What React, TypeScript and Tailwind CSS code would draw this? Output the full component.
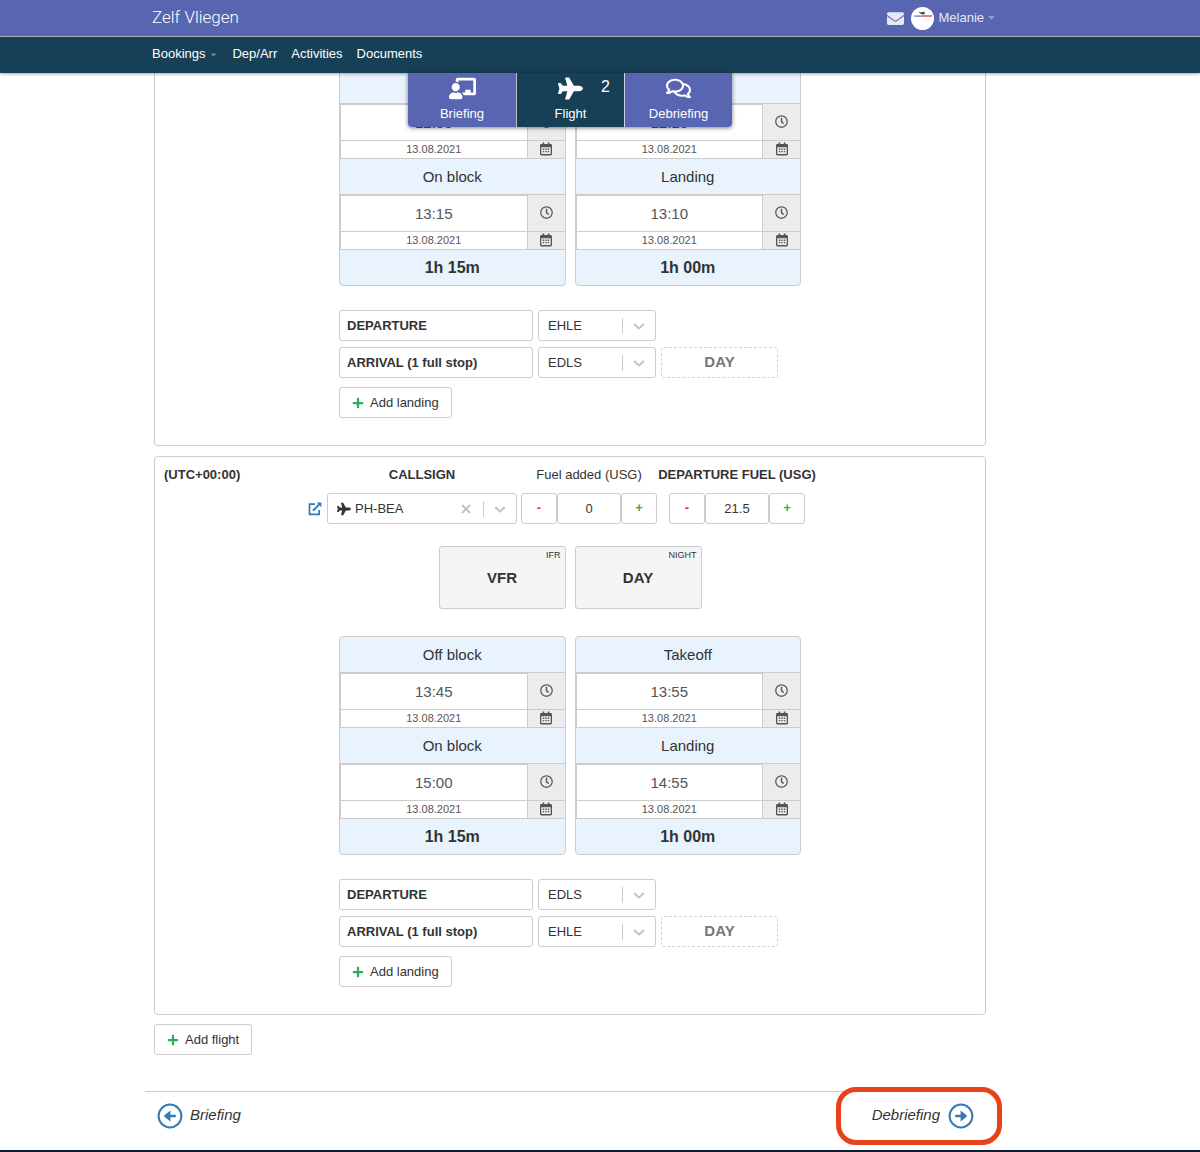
import { useState } from 'react';
import type { ReactNode } from 'react';
import {
   FaCaretDown,
   FaChalkboardTeacher,
   FaEnvelope,
   FaPlane,
   FaPlus,
   FaRegClock,
   FaRegComments
} from 'react-icons/fa';

interface Block {
   title: string;
   time: string;
}

interface FlightTimes {
   blocks: Block[];
   total: string;
}

const DATE = '13.08.2021';

const firstFlight: FlightTimes[] = [
   { blocks: [{ title: 'Off block', time: '12:00' }, { title: 'On block', time: '13:15' }], total: '1h 15m' },
   { blocks: [{ title: 'Takeoff', time: '12:10' }, { title: 'Landing', time: '13:10' }], total: '1h 00m' }
];

const secondFlight: FlightTimes[] = [
   { blocks: [{ title: 'Off block', time: '13:45' }, { title: 'On block', time: '15:00' }], total: '1h 15m' },
   { blocks: [{ title: 'Takeoff', time: '13:55' }, { title: 'Landing', time: '14:55' }], total: '1h 00m' }
];

const Chevron = () => (
   <svg viewBox="0 0 20 20" className="h-[18px] w-[18px] fill-[#c4c4c4]" aria-hidden="true">
      <path d="M4.516 7.548c0.436-0.446 1.043-0.481 1.576 0l3.908 3.747 3.908-3.747c0.533-0.481 1.141-0.446 1.574 0 0.436 0.445 0.408 1.197 0 1.615-0.406 0.418-4.695 4.502-4.695 4.502-0.217 0.223-0.502 0.335-0.787 0.335s-0.57-0.112-0.789-0.335c0 0-4.287-4.084-4.695-4.502s-0.436-1.17 0-1.615z" />
   </svg>
);

const CalendarIcon = () => (
   <svg viewBox="0 0 12 14" className="h-[14px] w-3" fill="currentColor" aria-hidden="true">
      <path d="M2.6 0.4H4.2V2H7.8V0.4H9.4V2H10.6Q12 2 12 3.4V12Q12 13.4 10.6 13.4H1.4Q0 13.4 0 12V3.4Q0 2 1.4 2H2.6ZM1.3 5.2V11.6Q1.3 12.1 1.8 12.1H10.2Q10.7 12.1 10.7 11.6V5.2Z" fillRule="evenodd" />
      <path d="M2.8 6.6H4.2V7.9H2.8ZM5.3 6.6H6.7V7.9H5.3ZM7.8 6.6H9.2V7.9H7.8ZM2.8 9H4.2V10.3H2.8ZM5.3 9H6.7V10.3H5.3ZM7.8 9H9.2V10.3H7.8Z" />
   </svg>
);

const ExternalLink = () => (
   <svg viewBox="0 0 14 14" className="h-[14px] w-[14px]" fill="none" stroke="#337ab7" strokeWidth="1.7" aria-hidden="true">
      <path d="M7 2.2H1.5V12.4H11.2V8" />
      <path d="M5 8.7L11.6 2.1" strokeWidth="2" />
      <path d="M8.6 0.4H13.4V5.2Z" fill="#337ab7" stroke="none" />
   </svg>
);

const CircleArrow = ({ left }: { left?: boolean }) => (
   <svg viewBox="0 0 26 26" className={left ? 'h-[26px] w-[26px] rotate-180' : 'h-[26px] w-[26px]'} aria-hidden="true">
      <circle cx="13" cy="13" r="11.4" fill="none" stroke="#337ab7" strokeWidth="2" />
      <path d="M7.2 11.7H12.6V8.2Q12.6 7.4 13.3 8L18.6 12.3Q19.3 13 18.6 13.7L13.3 18Q12.6 18.6 12.6 17.8V14.3H7.2Z" fill="#337ab7" />
   </svg>
);

const Tab = ({ icon, label, active, count }: { icon: ReactNode; label: string; active?: boolean; count?: number }) => (
   <button
      type="button"
      className={`relative flex h-[54px] w-[108px] flex-col items-center gap-1 border-white/70 pt-[3px] text-[13px] leading-5 text-white not-first:border-l ${active ? 'bg-[#173f56]' : 'bg-[#5865b0]'}`}
   >
      <span className="flex h-6 items-center">{icon}</span>
      <span>{label}</span>
      {count && <span className="absolute top-1 right-[14px] text-base leading-5">{count}</span>}
   </button>
);

const Select = ({ label, value, className, children }: { label: string; value: string; className: string; children?: ReactNode }) => (
   <div className={`flex h-[31px] items-center rounded-[3px] border border-[#ccc] bg-white ${className}`}>
      {children}
      <select aria-label={label} defaultValue={value} className="order-2 h-full min-w-0 flex-1 appearance-none text-[13px] outline-none">
         <option>{value}</option>
      </select>
      <span className="order-4 h-4 w-px bg-[#ccc]" />
      <span className="order-5 flex w-8 justify-center">
         <Chevron />
      </span>
   </div>
);

const Stepper = ({ label, initial }: { label: string; initial: string }) => {
   const [value, setValue] = useState(initial);
   const step = (by: number) => setValue(String(Number(value) + by));

   return (
      <div className="flex h-[31px]">
         <button type="button" aria-label={`Less ${label}`} onClick={() => step(-1)} className="w-9 rounded-[3px] border border-[#ccc] pb-0.5 text-[13px] font-bold text-[#d9342b]">
            -
         </button>
         <input
            id={label}
            value={value}
            onChange={(e) => setValue(e.target.value)}
            className="w-16 rounded-[3px] border border-[#ccc] text-center text-[13px] outline-none"
         />
         <button type="button" aria-label={`More ${label}`} onClick={() => step(1)} className="w-9 rounded-[3px] border border-[#ccc] pb-0.5 text-[13px] font-bold text-[#27ae60]">
            +
         </button>
      </div>
   );
};

const ModeButton = ({ value, other }: { value: string; other: string }) => (
   <button type="button" className="flex h-[63px] w-[127px] flex-col rounded-[3px] border border-[#ccc] bg-[#f5f5f5] px-1">
      <span className="mt-[3px] self-end text-[9px] leading-[11px]">{other}</span>
      <span className="mt-[5px] self-center text-[15px] leading-6 font-bold">{value}</span>
   </button>
);

const TimeCard = ({ times }: { times: FlightTimes }) => (
   <div className="flex-1 overflow-hidden rounded-[4px] border border-[#ccc] bg-[#e8f3fd] text-center">
      {times.blocks.map((block) => (
         <div key={block.title}>
            <h3 className="h-9 border-b border-[#ccc] text-[15px] leading-9">{block.title}</h3>
            <div className="flex h-[37px]">
               <input aria-label={`${block.title} time`} defaultValue={block.time} className="min-w-0 flex-1 border border-[#ccc] bg-white pt-0.5 text-center text-[15px] text-[#555] outline-none" />
               <button type="button" aria-label={`Pick ${block.title} time`} className="flex w-[37px] items-center justify-center border-b border-[#ccc] bg-[#ececec] pb-0.5 text-[#555]">
                  <FaRegClock size={13} />
               </button>
            </div>
            <div className="flex h-[18px] border-b border-[#ccc]">
               <input aria-label={`${block.title} date`} defaultValue={DATE} className="min-w-0 flex-1 border-x border-[#ccc] bg-white text-center text-[11px] text-[#555] outline-none" />
               <button type="button" aria-label={`Pick ${block.title} date`} className="flex w-[37px] items-center justify-center bg-[#ececec] pb-0.5 text-[#555]">
                  <CalendarIcon />
               </button>
            </div>
         </div>
      ))}
      <p className="h-[35px] text-base leading-9 font-bold">{times.total}</p>
   </div>
);

const AddButton = ({ label }: { label: string }) => (
   <button type="button" className="flex h-[31px] items-center gap-1.5 rounded-[3px] border border-[#ccc] bg-white px-3 text-[13px]">
      <FaPlus size={12} className="text-[#27ae60]" />
      {label}
   </button>
);

const FlightDetails = ({ times, departure, arrival }: { times: FlightTimes[]; departure: string; arrival: string }) => (
   <div className="mx-auto w-[462px]">
      <div className="flex gap-[9px]">
         {times.map((t) => (
            <TimeCard key={t.total} times={t} />
         ))}
      </div>

      <div className="mt-6 flex flex-col gap-1.5">
         <div className="flex gap-[5px]">
            <div className="h-[31px] w-[194px] rounded-[3px] border border-[#ccc] px-[7px] text-[13px] leading-[29px] font-bold">DEPARTURE</div>
            <Select label="Departure airport" value={departure} className="w-[118px] pl-[9px]" />
         </div>
         <div className="flex gap-[5px]">
            <div className="h-[31px] w-[194px] rounded-[3px] border border-[#ccc] px-[7px] text-[13px] leading-[29px] font-bold">ARRIVAL (1 full stop)</div>
            <Select label="Arrival airport" value={arrival} className="w-[118px] pl-[9px]" />
            <button type="button" className="w-[117px] rounded-[3px] border border-dashed border-[#d4d4d4] text-[15px] font-bold text-[#777]">DAY</button>
         </div>
      </div>

      <div className="mt-[9px]">
         <AddButton label="Add landing" />
      </div>
   </div>
);

const Header = () => (
   <header className="sticky top-0 z-10 text-white shadow-[0_1px_3px_rgba(0,0,0,0.35)]">
      <div className="border-b border-[#a9a9b8] bg-[#5865b0] pr-15">
         <div className="mx-auto flex h-9 max-w-[850px] items-center justify-between pl-[7px]">
            <a href="#home" className="font-['Roboto',sans-serif] text-[17px] font-light">Zelf Vliegen</a>
            <div className="flex items-center gap-[7px] text-[13px] text-[#e6e8f5]">
               <a href="#messages" aria-label="Messages">
                  <FaEnvelope size={17} />
               </a>
               <button type="button" className="flex items-center gap-1">
                  <svg viewBox="0 0 23 23" className="h-[23px] w-[23px]" aria-hidden="true">
                     <circle cx="11.5" cy="11.5" r="11.5" fill="#fff" />
                     <path d="M3 8.4H10.5V9.8H3.4Z" fill="#5b79c4" />
                     <path d="M10.5 8.2H21.5L20.5 9.8H10.5Z" fill="#e0524d" />
                     <path d="M7 4.5L10 5.6L13.5 4.8V7.2H10.6L9 6Z" fill="#333" />
                  </svg>
                  Melanie
                  <svg viewBox="0 0 7 4" className="h-1 w-[7px]" fill="#8f98d0" aria-hidden="true">
                     <path d="M0 0H7L3.5 4Z" />
                  </svg>
               </button>
            </div>
         </div>
      </div>
      <div className="bg-[#173f56] pr-15">
         <nav className="mx-auto flex h-9 max-w-[850px] items-center gap-[14px] pb-0.5 pl-[7px] text-[13px]">
            <a href="#bookings" className="flex items-center gap-1">
               Bookings
               <FaCaretDown size={9} className="text-[#6f8a99]" />
            </a>
            <a href="#dep-arr">Dep/Arr</a>
            <a href="#activities">Activities</a>
            <a href="#documents">Documents</a>
         </nav>
      </div>

      {/* Step tabs hang below the bar */}
      <div className="absolute inset-x-0 top-full flex justify-center pr-15">
         <div className="flex overflow-hidden rounded-b-[4px] shadow-[0_1px_4px_rgba(0,0,0,0.5)]">
            <Tab icon={<FaChalkboardTeacher size={27} />} label="Briefing" />
            <Tab icon={<FaPlane size={25} />} label="Flight" active count={2} />
            <Tab icon={<FaRegComments size={25} />} label="Debriefing" />
         </div>
      </div>
   </header>
);

const App = () => {
   return (
      <div className="bg-white font-['Liberation_Sans',Arial,sans-serif] text-[#333]">
         <Header />

         <div className="pr-15">
            <main className="mx-auto max-w-[850px]">
               <div className="px-[9px]">
                  {/* First flight, scrolled under the header */}
                  <section className="rounded-b-[4px] border border-t-0 border-[#ccc] pb-[27px]">
                     <div className="-mt-1.5">
                        <FlightDetails times={firstFlight} departure="EHLE" arrival="EDLS" />
                     </div>
                  </section>

                  <section className="mt-2.5 rounded-[4px] border border-[#ccc] pb-[27px]">
                     <div className="flex pt-2 pl-[9px] text-[13px]">
                        <p className="w-36 leading-5 font-bold">(UTC+00:00)</p>
                        <div>
                           <p className="pl-[19px] text-center leading-5 font-bold">CALLSIGN</p>
                           <div className="mt-2 flex items-center gap-[5px]">
                              <a href="#aircraft" aria-label="Open aircraft">
                                 <ExternalLink />
                              </a>
                              <Select label="Callsign" value="PH-BEA" className="w-[190px] pl-[9px]">
                                 <FaPlane size={14} className="order-1 mr-1" />
                                 <button type="button" aria-label="Clear callsign" className="order-3 mr-3">
                                    <svg viewBox="0 0 10 10" className="h-[10px] w-[10px]" stroke="#c4c4c4" strokeWidth="2" aria-hidden="true">
                                       <path d="M1 1L9 9M9 1L1 9" />
                                    </svg>
                                 </button>
                              </Select>
                           </div>
                        </div>
                        <div className="ml-1 flex w-[136px] flex-col items-center gap-2">
                           <label htmlFor="fuel-added" className="leading-5 whitespace-nowrap">Fuel added (USG)</label>
                           <Stepper label="fuel-added" initial="0" />
                        </div>
                        <div className="ml-3 flex w-[136px] flex-col items-center gap-2">
                           <label htmlFor="departure-fuel" className="leading-5 font-bold whitespace-nowrap">DEPARTURE FUEL (USG)</label>
                           <Stepper label="departure-fuel" initial="21.5" />
                        </div>
                     </div>

                     <div className="mt-[22px] mb-[27px] flex justify-center gap-[9px]">
                        <ModeButton value="VFR" other="IFR" />
                        <ModeButton value="DAY" other="NIGHT" />
                     </div>

                     <FlightDetails times={secondFlight} departure="EDLS" arrival="EHLE" />
                  </section>

                  <div className="mt-[9px]">
                     <AddButton label="Add flight" />
                  </div>
               </div>

               <footer className="mt-9 mb-[11px] flex h-12 items-center justify-between border-t border-[#ccc] px-3 text-[15px] italic">
                  <a href="#briefing" className="flex items-center gap-[7px]">
                     <CircleArrow left />
                     Briefing
                  </a>
                  <a href="#debriefing" className="relative mr-[9px] flex items-center gap-2">
                     Debriefing
                     <CircleArrow />
                     <span className="absolute -inset-y-4 -right-7 -left-9 rounded-[20px] border-5 border-[#e8421a]" />
                  </a>
               </footer>
            </main>
         </div>
         <div className="h-0.5 bg-[#0b1c33]" />
      </div>
   );
};

export default App;
